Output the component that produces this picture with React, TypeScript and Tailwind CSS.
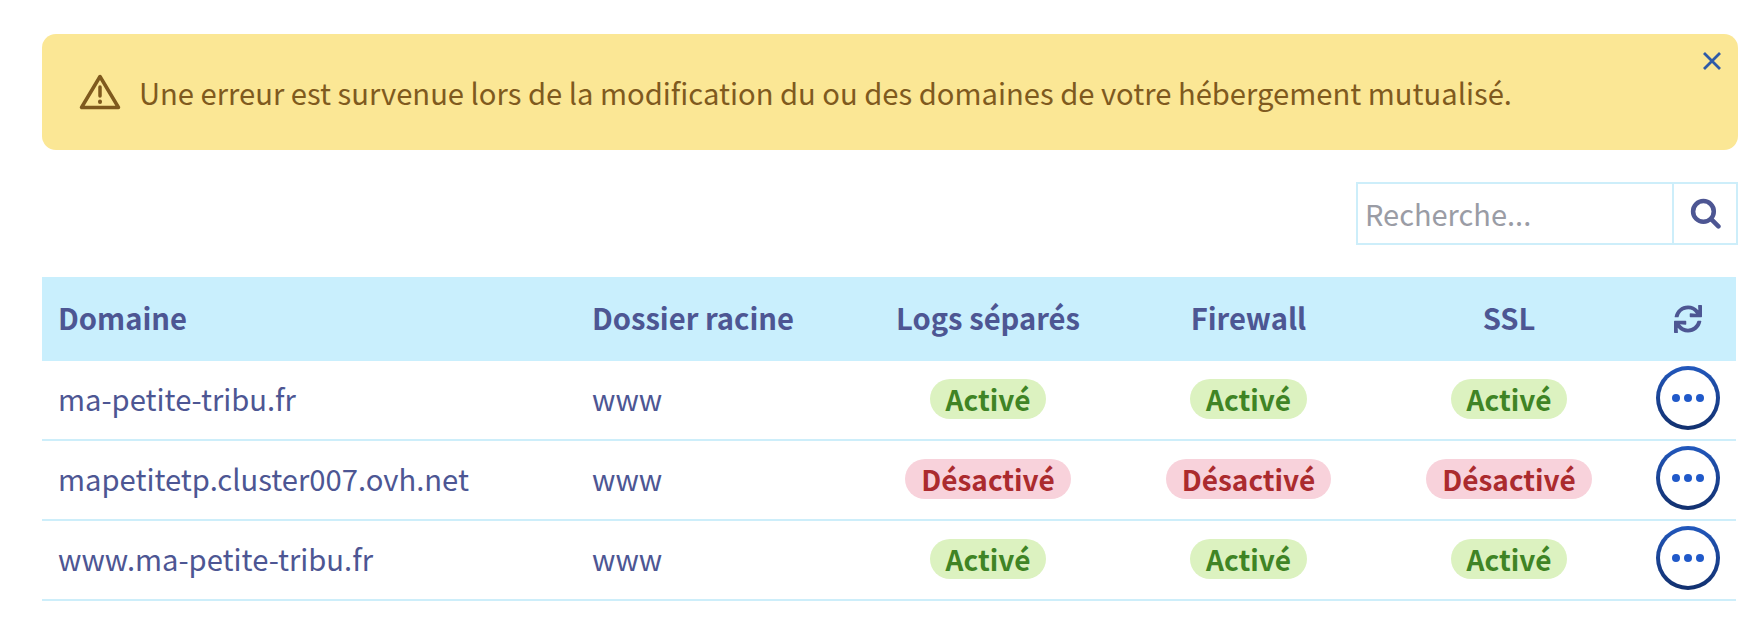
import { FaSync } from 'react-icons/fa'

const rows = [
  { domain: 'ma-petite-tribu.fr', on: true },
  { domain: 'mapetitetp.cluster007.ovh.net', on: false },
  { domain: 'www.ma-petite-tribu.fr', on: true },
]

const gridCols = 'grid grid-cols-[534px_282px_260px_261px_260px_1fr] items-center'

function Badge({ on }: { on: boolean }) {
  return (
    <span
      className={
        on
          ? 'inline-flex h-10 items-center rounded-full bg-[#dcf2c0] px-4 text-[28px] leading-none font-semibold text-[#3f8425]'
          : 'inline-flex h-10 items-center rounded-full bg-[#f8d2db] px-4 text-[28px] leading-none font-semibold text-[#ab2b2e]'
      }>
      {on ? 'Activé' : 'Désactivé'}
    </span>
  )
}

function ActionButton() {
  return (
    <button className="mb-[5px] flex h-16 w-16 items-center justify-center rounded-full bg-gradient-to-b from-[#2258bd] to-[#12306e] p-[4px]">
      <span className="flex h-full w-full items-center justify-center gap-[4px] rounded-full bg-white">
        <span className="h-2 w-2 rounded-full bg-[#2059c9]" />
        <span className="h-2 w-2 rounded-full bg-[#2059c9]" />
        <span className="h-2 w-2 rounded-full bg-[#2059c9]" />
      </span>
    </button>
  )
}

export default function App() {
  return (
    <div className="min-h-[624px] bg-white pt-[34px] pr-[18px] pl-[42px] font-['Noto_Sans_CJK_SC','Noto_Sans',sans-serif] text-[#4d5693]">
      <div className="relative flex h-[116px] items-center rounded-[14px] bg-[#fbe795] pl-[37px] text-[#7f5a1e]">
        <svg width="42" height="36" viewBox="0 0 42 36" fill="none" stroke="currentColor" strokeWidth="3.5" strokeLinejoin="round" strokeLinecap="round">
          <path d="M21 2.5 2.5 33.5h37Z" />
          <path d="M21 13v9" />
          <path d="M21 27.5v.5" strokeWidth="4" />
        </svg>
        <p className="ml-[18px] pt-[2px] text-[29.2px] leading-none">
          Une erreur est survenue lors de la modification du ou des domaines de votre hébergement mutualisé.
        </p>
        <button className="absolute top-[17px] right-[16px] text-[#2f5ba8]">
          <svg width="20" height="20" viewBox="0 0 20 20" fill="none" stroke="currentColor" strokeWidth="2.8">
            <path d="M2 2l16 16M18 2 2 18" />
          </svg>
        </button>
      </div>

      <div className="mt-[32px] flex justify-end">
        <div className="flex h-[63px] w-[382px] border-2 border-[#cdeefa]">
          <input
            placeholder="Recherche..."
            className="w-[316px] border-r-2 border-[#cdeefa] pr-2 pb-[2px] pl-[7px] text-[29px] leading-none outline-none placeholder:text-[#9a9ca5]"
          />
          <div className="flex flex-1 items-center justify-center">
            <svg width="31" height="31" viewBox="0 0 30 30" fill="none" stroke="currentColor" strokeWidth="4.4" strokeLinecap="round">
              <circle cx="13" cy="13" r="10" />
              <path d="M20.5 20.5 27.5 27.5" />
            </svg>
          </div>
        </div>
      </div>

      <div className="mt-8 w-[1694px]">
        <div className={`${gridCols} h-[84px] bg-[#c9effd] pb-[2px] text-[29.2px] leading-none font-bold`}>
          <div className="pl-[16px]">Domaine</div>
          <div className="pl-[16px]">Dossier racine</div>
          <div className="text-center">Logs séparés</div>
          <div className="text-center">Firewall</div>
          <div className="text-center">SSL</div>
          <div className="mt-[2px] flex justify-center">
            <FaSync size={28} />
          </div>
        </div>
        {rows.map((row) => (
          <div key={row.domain} className={`${gridCols} h-[80px] border-b-2 border-[#cdeefa] text-[29.2px] leading-none`}>
            <div className="pb-[2px] pl-[16px]">{row.domain}</div>
            <div className="pb-[2px] pl-[16px]">www</div>
            <div className="pb-[3px] text-center">
              <Badge on={row.on} />
            </div>
            <div className="pb-[3px] text-center">
              <Badge on={row.on} />
            </div>
            <div className="pb-[3px] text-center">
              <Badge on={row.on} />
            </div>
            <div className="flex justify-center">
              <ActionButton />
            </div>
          </div>
        ))}
      </div>
    </div>
  )
}
